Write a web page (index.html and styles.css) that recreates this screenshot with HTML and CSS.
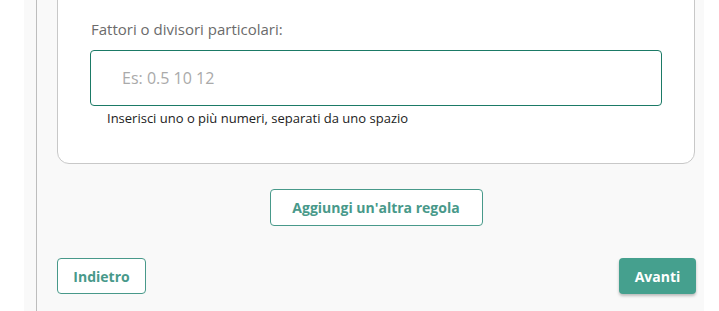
FILE: index.html
```html
<!DOCTYPE html>
<html lang="it">
<head>
    <meta charset="UTF-8">
    <meta name="viewport" content="width=device-width, initial-scale=1.0">
    <title>Regole</title>
    <link rel="stylesheet" href="styles.css">
</head>
<body>

<div class="page">
    <div class="main">
        <div class="card">
            <div class="form-group">
                <label for="fattori">Fattori o divisori particolari:</label>
                <input type="text" id="fattori" placeholder="Es: 0.5 10 12">
                <div class="hint">Inserisci uno o più numeri, separati da uno spazio</div>
            </div>
        </div>

        <div class="add-row">
            <button class="btn btn-outline btn-add">Aggiungi un'altra regola</button>
        </div>

        <div class="nav-row">
            <button class="btn btn-outline">Indietro</button>
            <button class="btn btn-primary">Avanti</button>
        </div>
    </div>
</div>

</body>
</html>
```

FILE: styles.css
```css
body {
    font-family: "Open Sans", Arial, sans-serif;
    background-color: #fff;
    margin: 0;
    padding: 0;
    overflow: hidden;
}
.page {
    margin-left: 24px;
    width: 680px;
    height: 311px;
    background-color: #f9f9f9;
    padding-left: 12px;
    box-sizing: border-box;
    display: flow-root;
}
.main {
    border-left: 1px solid #bdbdbd;
    height: 100%;
    padding-left: 20px;
    width: 659px;
    box-sizing: border-box;
    display: flow-root;
}
.card {
    width: 638px;
    box-sizing: border-box;
    margin-top: -32px;
    padding: 50px 32px 36px 32px;
    background-color: #fff;
    border: 1px solid #c8c8c8;
    border-radius: 12px;
}
.form-group label {
    display: block;
    font-size: 15px;
    color: #6b6b6b;
    margin-left: 1px;
    line-height: 20px;
    margin-bottom: 11px;
}
.form-group input {
    display: block;
    width: 100%;
    height: 56px;
    box-sizing: border-box;
    padding: 0 31px;
    border: 1px solid #1b7a66;
    border-radius: 4px;
    font-family: inherit;
    font-size: 16px;
    color: #333;
    outline: none;
}
.form-group input::placeholder {
    color: #aaa;
}
.hint {
    font-size: 13px;
    color: #222;
    margin-left: 17px;
    margin-top: 4px;
    line-height: 17px;
}
.add-row {
    width: 638px;
    display: flex;
    justify-content: center;
    margin-top: 25px;
}
.btn {
    font-family: inherit;
    font-weight: 700;
    font-size: 14px;
    border-radius: 4px;
    cursor: pointer;
    white-space: nowrap;
    padding: 0;
}
.btn-outline {
    background-color: #fff;
    color: #48998a;
    border: 1px solid #48998a;
    height: 36px;
}
.btn-add {
    width: 213px;
    height: 37px;
}
.nav-row {
    width: 639px;
    display: flex;
    justify-content: space-between;
    margin-top: 32px;
}
.btn-primary {
    background-color: #45a08e;
    color: #fff;
    border: none;
    height: 36px;
    width: 77px;
    box-shadow: 0 2px 3px rgba(0, 0, 0, 0.25);
}
.nav-row .btn-outline {
    width: 89px;
}
```
